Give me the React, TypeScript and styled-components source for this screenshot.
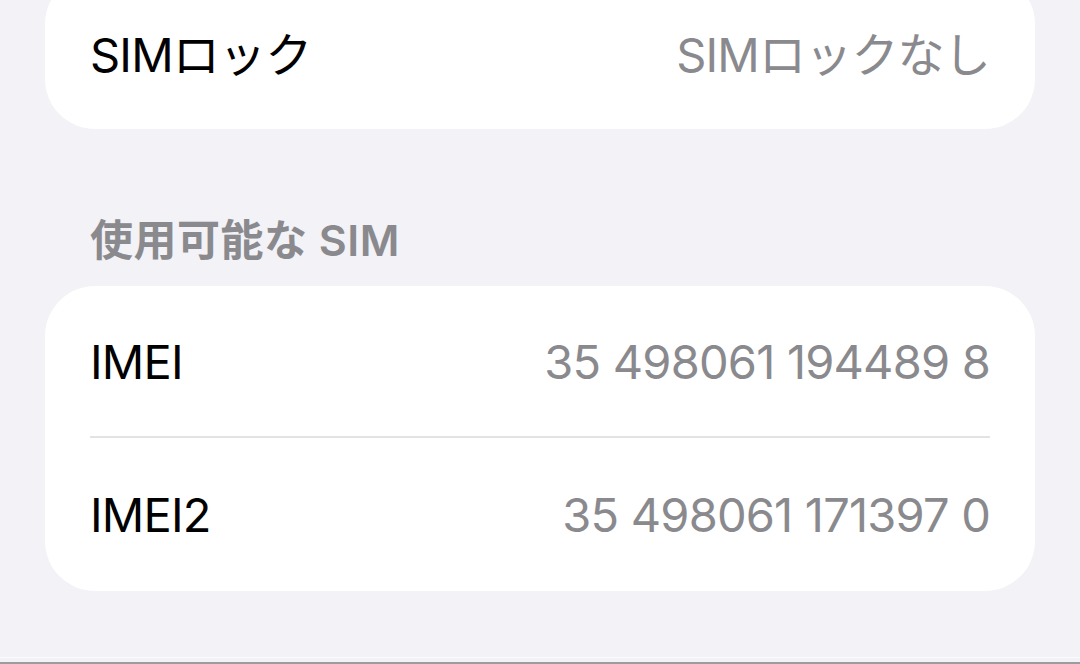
import React from 'react';
import styled, { createGlobalStyle } from 'styled-components';

const GlobalStyle = createGlobalStyle`
    html, body {
        margin: 0;
        padding: 0;
        background: #f2f2f7;
    }
    * {
        box-sizing: border-box;
    }
`;

const Page = styled.div`
    position: relative;
    width: 1080px;
    height: 664px;
    overflow: hidden;
    display: flex;
    flex-direction: column;
    background: #f2f2f7;
    font-family: Inter, 'Noto Sans CJK JP', sans-serif;
    -webkit-font-smoothing: antialiased;
`;

const Content = styled.div`
    flex: 1;
    padding: 0 45px;
`;

const Card = styled.div<{ $offsetTop?: number }>`
    background: #ffffff;
    border-radius: 50px;
    margin-top: ${(p) => (p.$offsetTop ? `${p.$offsetTop}px` : '0')};
    overflow: hidden;
`;

const Row = styled.div<{ $height: number }>`
    height: ${(p) => p.$height}px;
    margin: 0 45px;
    display: flex;
    align-items: center;
    justify-content: space-between;
    font-size: 47px;
    letter-spacing: -0.8px;
`;

const Divider = styled.div`
    height: 2px;
    margin: 0 45px;
    background: #e3e3e6;
`;

const Label = styled.span`
    color: #000000;
`;

const Value = styled.span`
    color: #8a8a8e;
`;

const SectionHeader = styled.div`
    margin: 85px 0 20px;
    padding-left: 45px;
    line-height: 52px;
    font-size: 43px;
    font-weight: 600;
    color: #8a8a8e;
    letter-spacing: 0.5px;
`;

const BottomEdge = styled.div`
    height: 7px;
    border-top: 1px solid #fbfbfd;
    border-bottom: 2px solid #9c9ca0;
`;

type Item = { label: string; value: string; height: number };

const imei: Item[] = [
    { label: 'IMEI', value: '35 498061 194489 8', height: 150 },
    { label: 'IMEI2', value: '35 498061 171397 0', height: 153 },
];

const App = () => {
    return (
        <>
            <GlobalStyle />
            <Page>
                <Content>
                    <Card $offsetTop={-26}>
                        <Row $height={155}>
                            <Label>SIMロック</Label>
                            <Value>SIMロックなし</Value>
                        </Row>
                    </Card>
                    <SectionHeader>使用可能な SIM</SectionHeader>
                    <Card>
                        {imei.map((item, i) => (
                            <React.Fragment key={item.label}>
                                {i > 0 && <Divider />}
                                <Row $height={item.height}>
                                    <Label>{item.label}</Label>
                                    <Value>{item.value}</Value>
                                </Row>
                            </React.Fragment>
                        ))}
                    </Card>
                </Content>
                <BottomEdge />
            </Page>
        </>
    );
};

export default App;
